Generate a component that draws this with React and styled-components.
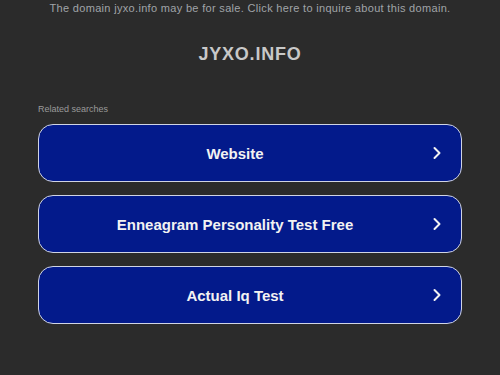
import React from "react";
import styled, { createGlobalStyle } from "styled-components";

const Global = createGlobalStyle`
  html, body { margin: 0; padding: 0; background: #2b2b2b; }
  body { font-family: "Liberation Sans", Arial, sans-serif; }
`;

const Page = styled.div`
  width: 500px;
  height: 375px;
  background: #2b2b2b;
  display: flex;
  flex-direction: column;
  align-items: center;
  overflow: hidden;
`;

const Banner = styled.a`
  display: block;
  margin-top: 2px;
  font-size: 11px;
  line-height: 13px;
  letter-spacing: 0.32px;
  color: #a0a4a8;
  text-decoration: none;
  text-align: center;
`;

const Title = styled.h1`
  margin: 29px 0 0;
  font-size: 18px;
  line-height: 20px;
  font-weight: bold;
  color: #c8c8c8;
  letter-spacing: 0.8px;
`;

const Section = styled.div`
  width: 424px;
  margin-top: 40px;
  display: flex;
  flex-direction: column;
`;

const Label = styled.div`
  font-size: 9px;
  line-height: 11px;
  color: #9a9a9a;
  margin-bottom: 9px;
`;

const List = styled.div`
  display: flex;
  flex-direction: column;
  gap: 13px;
`;

const Item = styled.a`
  box-sizing: border-box;
  height: 58px;
  border: 1.5px solid #d0d4e4;
  border-radius: 15px;
  background: #031a8b;
  display: flex;
  align-items: center;
  justify-content: center;
  padding: 0 30px 0 0;
  position: relative;
  color: #f2f2f2;
  font-size: 15px;
  font-weight: bold;
  text-decoration: none;
`;

const Chevron = styled.svg`
  position: absolute;
  right: 19px;
  top: 50%;
  transform: translateY(-50%);
`;

const items = ["Website", "Enneagram Personality Test Free", "Actual Iq Test"];

export default function App() {
  return (
    <Page>
      <Global />
      <Banner href="#">The domain jyxo.info may be for sale. Click here to inquire about this domain.</Banner>
      <Title>JYXO.INFO</Title>
      <Section>
        <Label>Related searches</Label>
        <List>
          {items.map((t) => (
            <Item key={t} href="#">
              {t}
              <Chevron width="10" height="14" viewBox="0 0 10 14">
                <path d="M2.5 2 L7.5 7 L2.5 12" fill="none" stroke="#f2f2f2" strokeWidth="2" strokeLinecap="round" strokeLinejoin="round" />
              </Chevron>
            </Item>
          ))}
        </List>
      </Section>
    </Page>
  );
}
